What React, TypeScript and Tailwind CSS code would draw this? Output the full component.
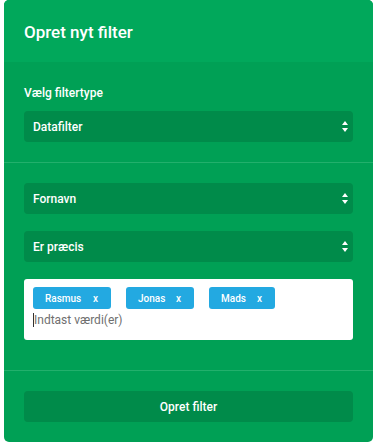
import React from 'react'

const font = { fontFamily: 'Roboto, "Liberation Sans", Arial, sans-serif' }

function Arrows() {
  return (
    <svg width="6" height="11" viewBox="0 0 6 11" className="shrink-0">
      <path d="M3 0 L6 4 L0 4 Z" fill="#fff" />
      <path d="M3 11 L6 7 L0 7 Z" fill="#fff" />
    </svg>
  )
}

function Select({ value }: { value: string }) {
  return (
    <div className="h-[31px] rounded-[4px] bg-[#008b4a] flex items-center justify-between pl-[9px] pr-[5px]">
      <span className="text-[12px] font-medium text-white">{value}</span>
      <Arrows />
    </div>
  )
}

function Tag({ label, w }: { label: string; w: string }) {
  return (
    <span className={`h-[22px] ${w} rounded-[3px] bg-[#23a9e1] flex items-center justify-between pl-[12px] pr-[13px] text-[10px] font-medium text-white`}>
      <span>{label}</span>
      <span>x</span>
    </span>
  )
}

export default function App() {
  const tags = [
    { label: 'Rasmus', w: 'w-[78px]' },
    { label: 'Jonas', w: 'w-[68px]' },
    { label: 'Mads', w: 'w-[66px]' },
  ]
  return (
    <div className="w-[374px] h-[443px] bg-white pl-[4px] pr-[1px]" style={font}>
      <div className="h-[442px] rounded-[5px] bg-[#00a055] overflow-hidden">
        <div className="h-[62px] bg-[#01a85b] px-[20px] flex items-center">
          <h1 className="text-[17px] font-medium text-white pt-[4px]">Opret nyt filter</h1>
        </div>
        <div className="px-[20px] pt-[24px] pb-[20px] border-b border-[#22b06c]">
          <div className="text-[12px] font-medium text-white leading-[14px] mb-[11px]">Vælg filtertype</div>
          <Select value="Datafilter" />
        </div>
        <div className="px-[20px] pt-[20px] pb-[30px] border-b border-[#22b06c] flex flex-col gap-[17px]">
          <Select value="Fornavn" />
          <Select value="Er præcis" />
          <div className="h-[61px] rounded-[3px] bg-white px-[9px] pt-[8px]">
            <div className="flex gap-[15px]">
              {tags.map(t => <Tag key={t.label} label={t.label} w={t.w} />)}
            </div>
            <div className="flex items-center mt-[3px] h-[16px]">
              <span className="w-px h-[14px] bg-[#333]" />
              <span className="text-[12px] text-[#6f6f6f]">Indtast værdi(er)</span>
            </div>
          </div>
        </div>
        <div className="px-[20px] pt-[20px]">
          <button className="w-full h-[31px] rounded-[4px] bg-[#008b4a] text-[12px] font-medium text-white">Opret filter</button>
        </div>
      </div>
    </div>
  )
}
